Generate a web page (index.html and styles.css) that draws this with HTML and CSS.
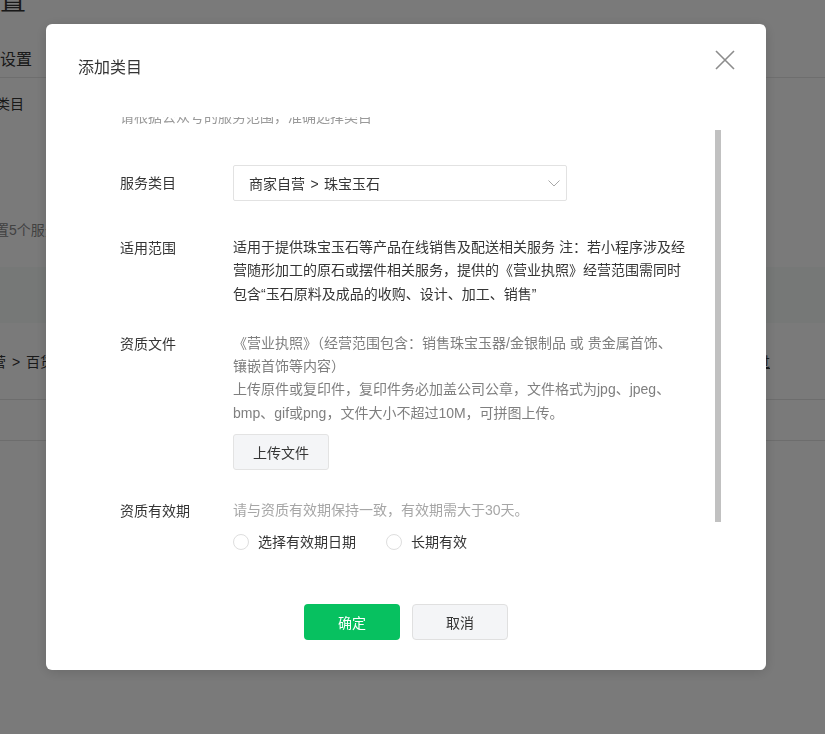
FILE: index.html
```html
<!DOCTYPE html>
<html lang="zh-CN">
<head>
    <meta charset="UTF-8">
    <title>添加类目</title>
    <link rel="stylesheet" href="styles.css">
</head>
<body>
    <div class="pagina">
        <h1 class="titulo-pagina">配置</h1>
        <div class="abas">
            <span class="aba">服务设置</span>
        </div>
        <div class="secao">
            <h3>服务类目</h3>
            <p class="dica-pagina">最多可设置5个服务类目</p>
        </div>
        <div class="tabela-cabecalho"></div>
        <div class="tabela-linha">
            <span class="caminho">商家自营 &gt; 百货</span>
            <a class="link">审核通过</a>
        </div>
        <div class="tabela-linha vazia"></div>
    </div>

    <div class="mascara"></div>

    <div class="dialogo">
        <div class="dialogo-topo">
            <h2>添加类目</h2>
            <span class="fechar">
                <svg width="20" height="20" viewBox="0 0 20 20"><path d="M1 1L19 19M19 1L1 19" stroke="#8c8c8c" stroke-width="1.6" fill="none"/></svg>
            </span>
        </div>

        <div class="dialogo-corpo">
            <div class="rolagem">
                <p class="aviso">请根据公众号的服务范围，准确选择类目</p>

                <div class="linha linha-select">
                    <label>服务类目</label>
                    <div class="valor">
                        <div class="select">
                            <span class="caminho-select">商家自营 &gt; 珠宝玉石</span>
                            <svg width="12" height="7" viewBox="0 0 12 7"><path d="M0.5 0.5L6 6L11.5 0.5" stroke="#a8a8a8" stroke-width="1" fill="none"/></svg>
                        </div>
                    </div>
                </div>

                <div class="linha linha-escopo">
                    <label>适用范围</label>
                    <div class="valor texto">适用于提供珠宝玉石等产品在线销售及配送相关服务 注：若小程序涉及经<br>营随形加工的原石或摆件相关服务，提供的《营业执照》经营范围需同时<br>包含“玉石原料及成品的收购、设计、加工、销售”</div>
                </div>

                <div class="linha linha-arquivo">
                    <label>资质文件</label>
                    <div class="valor">
                        <div class="texto cinza">《营业执照》（经营范围包含：销售珠宝玉器/金银制品 或 贵金属首饰、<br>镶嵌首饰等内容）<br>上传原件或复印件，复印件务必加盖公司公章，文件格式为jpg、jpeg、<br>bmp、gif或png，文件大小不超过10M，可拼图上传。</div>
                        <button class="botao-upload">上传文件</button>
                    </div>
                </div>

                <div class="linha linha-validade">
                    <label>资质有效期</label>
                    <div class="valor">
                        <div class="texto claro">请与资质有效期保持一致，有效期需大于30天。</div>
                        <div class="radios">
                            <span class="radio"><i></i>选择有效期日期</span>
                            <span class="radio"><i></i>长期有效</span>
                        </div>
                    </div>
                </div>
            </div>
            <div class="barra-rolagem"></div>
        </div>

        <div class="dialogo-rodape">
            <button class="confirmar">确定</button>
            <button class="cancelar">取消</button>
        </div>
    </div>
</body>
</html>
```

FILE: styles.css
```css
* {
    margin: 0;
    padding: 0;
    box-sizing: border-box;
}

body {
    font-family: "Liberation Sans", "Noto Sans CJK SC", sans-serif;
    font-size: 14px;
    color: #353535;
    background-color: #ffffff;
    overflow: hidden;
    height: 734px;
}

/* pagina de fundo */
.pagina {
    margin-left: -46px;
    width: 900px;
}

.titulo-pagina {
    font-size: 26px;
    font-weight: normal;
    line-height: 30px;
    margin-top: -14px;
    padding-left: 20px;
    height: 57px;
}

.abas {
    height: 35px;
    border-bottom: 1px solid #e7e7e7;
    font-size: 16px;
    padding-left: 14px;
}

.aba {
    display: inline-block;
    line-height: 34px;
}

.secao {
    height: 189px;
    padding-left: 14px;
}

.secao h3 {
    font-size: 14px;
    font-weight: normal;
    line-height: 52px;
}

.dica-pagina {
    color: #8a8a8a;
    margin-top: 90px;
    line-height: 20px;
    margin-left: -29px;
}

.tabela-cabecalho {
    height: 56px;
    background-color: #f6fbf8;
}

.tabela-linha {
    height: 77px;
    border-bottom: 1px solid #e4e4e4;
    display: flex;
    align-items: center;
    justify-content: space-between;
    padding-left: 0;
    padding-right: 84px;
}

.caminho {
    margin-left: -4px;
    word-spacing: 2px;
}

.tabela-linha.vazia {
    height: 41px;
}

.link {
    text-decoration: underline;
    color: #353535;
}

.mascara {
    position: fixed;
    top: 0;
    left: 0;
    right: 0;
    bottom: 0;
    background-color: rgba(0, 0, 0, 0.52);
}

/* dialogo */
.dialogo {
    position: fixed;
    left: 46px;
    top: 24px;
    width: 720px;
    height: 646px;
    background-color: #ffffff;
    border-radius: 6px;
    box-shadow: 0 2px 14px rgba(0, 0, 0, 0.15);
    display: flex;
    flex-direction: column;
}

.dialogo-topo {
    height: 93px;
    padding: 32px 32px 0 32px;
    position: relative;
}

.dialogo-topo h2 {
    font-size: 16px;
    font-weight: normal;
    line-height: 24px;
    color: #353535;
}

.fechar {
    position: absolute;
    top: 26px;
    right: 31px;
    width: 20px;
    height: 20px;
}

.dialogo-corpo {
    height: 463px;
    overflow: hidden;
    position: relative;
}

.rolagem {
    margin-top: -12px;
    padding-left: 74px;
}

.barra-rolagem {
    position: absolute;
    left: 669px;
    top: 13px;
    width: 6px;
    height: 392px;
    background-color: #c1c1c1;
}

.aviso {
    color: #9a9a9a;
    line-height: 24px;
}

.linha {
    display: flex;
}

.linha label {
    width: 113px;
    flex-shrink: 0;
    line-height: 24px;
}

.texto {
    line-height: 23.3px;
    white-space: nowrap;
}

.cinza {
    color: #7f7f7f;
}

.claro {
    color: #a6a6a6;
}

.linha-select {
    margin-top: 36px;
    align-items: center;
}

.select {
    width: 334px;
    height: 36px;
    border: 1px solid #e2e2e2;
    border-radius: 2px;
    display: flex;
    align-items: center;
    justify-content: space-between;
    padding: 0 6px 0 15px;
}

.caminho-select {
    word-spacing: 1.5px;
}

.linha-escopo {
    margin-top: 35px;
}

.linha-arquivo {
    margin-top: 26px;
}

.botao-upload {
    margin-top: 9px;
    width: 96px;
    height: 36px;
    background-color: #f4f5f7;
    border: 1px solid #e3e3e3;
    border-radius: 3px;
    font-family: inherit;
    font-size: 14px;
    color: #353535;
}

.linha-validade {
    margin-top: 29px;
}

.radios {
    display: flex;
    gap: 30px;
    margin-top: 8px;
    line-height: 24px;
}

.radio {
    display: flex;
    align-items: center;
}

.radio i {
    display: inline-block;
    width: 16px;
    height: 16px;
    border: 1px solid #dedede;
    border-radius: 50%;
    margin-right: 9px;
}

.dialogo-rodape {
    display: flex;
    justify-content: center;
    gap: 12px;
    padding-top: 24px;
}

.dialogo-rodape button {
    width: 96px;
    height: 36px;
    border-radius: 4px;
    font-family: inherit;
    font-size: 14px;
}

.confirmar {
    background-color: #07c160;
    border: none;
    color: #ffffff;
}

.cancelar {
    background-color: #f4f5f7;
    border: 1px solid #e0e0e0;
    color: #353535;
}
```
